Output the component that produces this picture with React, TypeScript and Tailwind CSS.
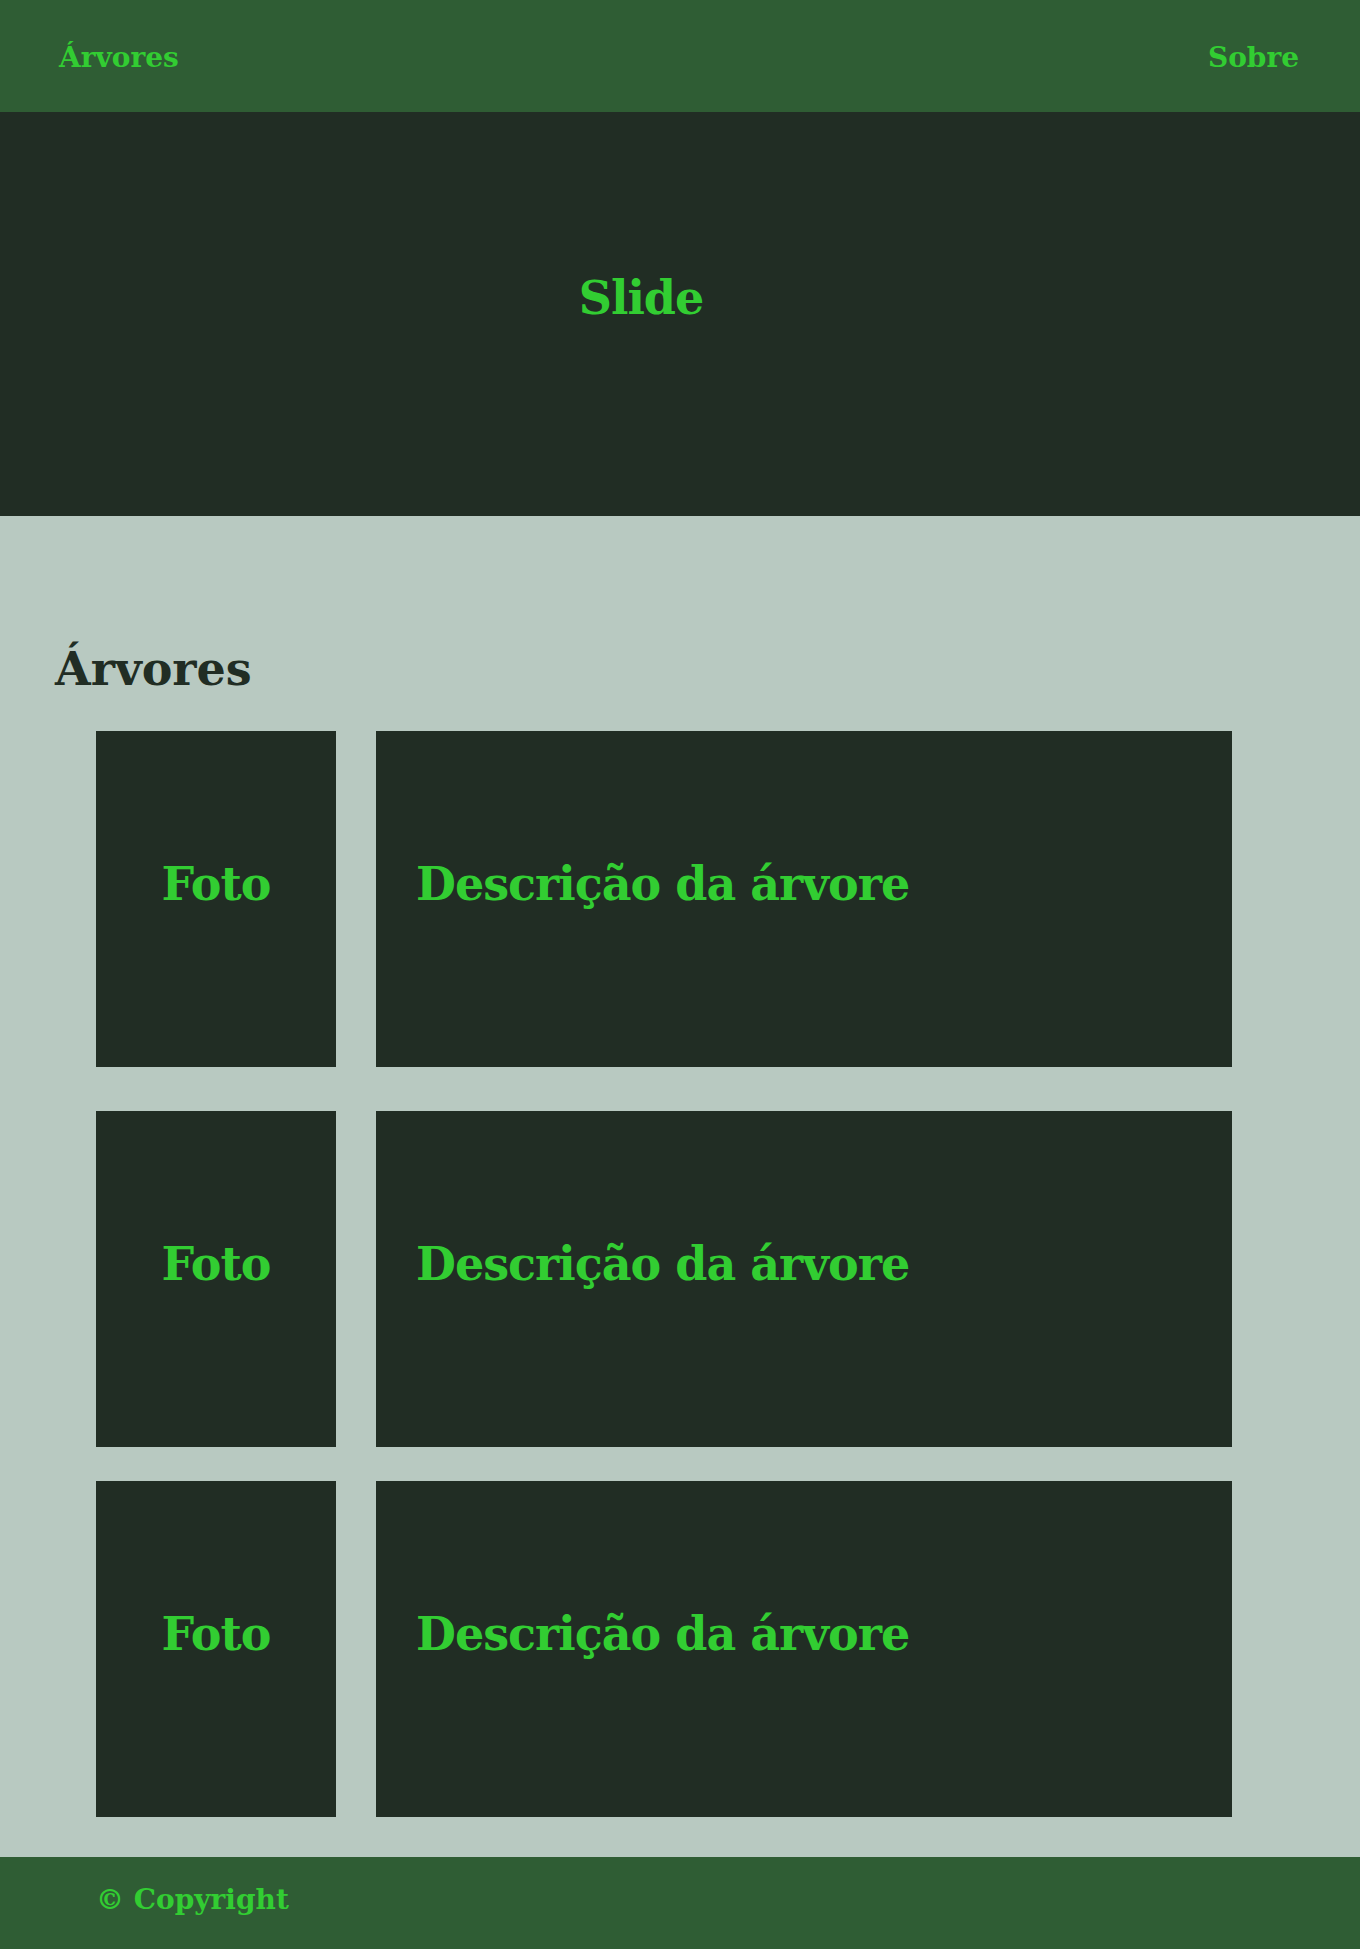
const arvores = [1, 2, 3]

const rowGaps = ["mt-[36px]", "mt-[44px]", "mt-[34px]"]

function ArvoreRow({ index }: { index: number }) {
    return (
        <div className={`flex gap-[40px] ml-[96px] ${rowGaps[index]}`}>
            <div className="w-[240px] h-[336px] bg-[#212d24] flex justify-center pt-[125px]">
                <h2 className="text-[46px] font-bold text-[#32cd32] leading-[56px] tracking-[-1px]">Foto</h2>
            </div>
            <div className="w-[856px] h-[336px] bg-[#212d24] pl-[40px] pt-[125px]">
                <h2 className="text-[46px] font-bold text-[#32cd32] leading-[56px] tracking-[-1px]">Descrição da árvore</h2>
            </div>
        </div>
    )
}

export default function App() {
    return (
        <div className="w-[1360px] min-h-[1949px] bg-[#b8c9c1] font-['DejaVu_Serif',serif] flex flex-col">
            <header className="h-[112px] bg-[#2f5d34] flex justify-between items-center pl-[59px] pr-[61px] pt-[4px]">
                <a className="text-[28px] font-bold text-[#32cd32]">Árvores</a>
                <a className="text-[28px] font-bold text-[#32cd32]">Sobre</a>
            </header>

            <section className="h-[404px] bg-[#212d24] flex justify-center pt-[158px] pr-[78px]">
                <h1 className="text-[46px] font-bold text-[#32cd32] leading-[56px] tracking-[-1px]">Slide</h1>
            </section>

            <main className="flex-1 pt-[127px] pb-[40px]">
                <h1 className="text-[46px] font-bold text-[#212d24] leading-[52px] ml-[55px]">Árvores</h1>
                {arvores.map((n, i) => (
                    <ArvoreRow key={n} index={i} />
                ))}
            </main>

            <footer className="h-[92px] bg-[#2f5d34] pl-[96px] pt-[26px]">
                <p className="text-[28px] font-bold text-[#32cd32] leading-[33px]">© Copyright</p>
            </footer>
        </div>
    )
}
